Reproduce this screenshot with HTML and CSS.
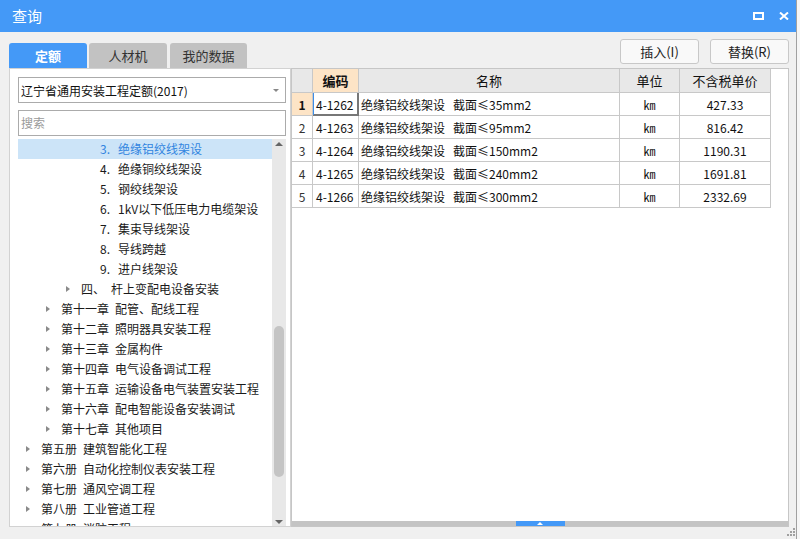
FILE: index.html
```html
<!DOCTYPE html>
<html lang="zh">
<head>
<meta charset="utf-8">
<title>查询</title>
<link rel="stylesheet" href="styles.css">
</head>
<body>
<div class="window">
  <header class="titlebar">
    <span class="title">查询</span>
    <div class="win-ctrls">
      <svg class="ic" width="11" height="8" viewBox="0 0 11 8"><rect x="1" y="1" width="9" height="6" fill="none" stroke="#fff" stroke-width="2"/></svg>
      <svg class="ic" width="10" height="8" viewBox="0 0 10 8"><path d="M1 0.5 L9 7.5 M9 0.5 L1 7.5" stroke="#fff" stroke-width="2" fill="none"/></svg>
    </div>
  </header>
  <div class="toolbar">
    <div class="tabs">
      <div class="tab active">定额</div>
      <div class="tab">人材机</div>
      <div class="tab narrow">我的数据</div>
    </div>
    <div class="actions">
      <button class="btn">插入(I)</button>
      <button class="btn">替换(R)</button>
    </div>
  </div>
  <div class="main">
    <aside class="left">
      <div class="select">
        <span class="select-text">辽宁省通用安装工程定额(2017)</span>
        <span class="select-arrow"></span>
      </div>
      <div class="search">搜索</div>
      <div class="tree">
        <div class="tree-body">
          <div class="row leaf sel"><span class="num">3.</span>绝缘铝绞线架设</div>
          <div class="row leaf"><span class="num">4.</span>绝缘铜绞线架设</div>
          <div class="row leaf"><span class="num">5.</span>钢绞线架设</div>
          <div class="row leaf"><span class="num">6.</span>1kV以下低压电力电缆架设</div>
          <div class="row leaf"><span class="num">7.</span>集束导线架设</div>
          <div class="row leaf"><span class="num">8.</span>导线跨越</div>
          <div class="row leaf"><span class="num">9.</span>进户线架设</div>
          <div class="row lv3"><span class="caret"></span><span class="pre">四、</span>杆上变配电设备安装</div>
          <div class="row lv2"><span class="caret"></span><span class="pre">第十一章</span>配管、配线工程</div>
          <div class="row lv2"><span class="caret"></span><span class="pre">第十二章</span>照明器具安装工程</div>
          <div class="row lv2"><span class="caret"></span><span class="pre">第十三章</span>金属构件</div>
          <div class="row lv2"><span class="caret"></span><span class="pre">第十四章</span>电气设备调试工程</div>
          <div class="row lv2"><span class="caret"></span><span class="pre">第十五章</span>运输设备电气装置安装工程</div>
          <div class="row lv2"><span class="caret"></span><span class="pre">第十六章</span>配电智能设备安装调试</div>
          <div class="row lv2"><span class="caret"></span><span class="pre">第十七章</span>其他项目</div>
          <div class="row lv1"><span class="caret"></span><span class="pre">第五册</span>建筑智能化工程</div>
          <div class="row lv1"><span class="caret"></span><span class="pre">第六册</span>自动化控制仪表安装工程</div>
          <div class="row lv1"><span class="caret"></span><span class="pre">第七册</span>通风空调工程</div>
          <div class="row lv1"><span class="caret"></span><span class="pre">第八册</span>工业管道工程</div>
          <div class="row lv1"><span class="caret"></span><span class="pre">第九册</span>消防工程</div>
        </div>
        <div class="vscroll">
          <span class="arr-up"></span>
          <div class="vtrack"><div class="vthumb"></div></div>
          <span class="arr-down"></span>
        </div>
      </div>
    </aside>
    <section class="right">
      <div class="grid">
        <div class="hd"></div>
        <div class="hd key">编码</div>
        <div class="hd">名称</div>
        <div class="hd">单位</div>
        <div class="hd">不含税单价</div>

        <div class="rn cur">1</div>
        <div class="c code focus">4-1262</div>
        <div class="c name">绝缘铝绞线架设<span class="sp"></span>截面≤35mm2</div>
        <div class="c ctr">㎞</div>
        <div class="c ctr">427.33</div>

        <div class="rn">2</div>
        <div class="c code">4-1263</div>
        <div class="c name">绝缘铝绞线架设<span class="sp"></span>截面≤95mm2</div>
        <div class="c ctr">㎞</div>
        <div class="c ctr">816.42</div>

        <div class="rn">3</div>
        <div class="c code">4-1264</div>
        <div class="c name">绝缘铝绞线架设<span class="sp"></span>截面≤150mm2</div>
        <div class="c ctr">㎞</div>
        <div class="c ctr">1190.31</div>

        <div class="rn">4</div>
        <div class="c code">4-1265</div>
        <div class="c name">绝缘铝绞线架设<span class="sp"></span>截面≤240mm2</div>
        <div class="c ctr">㎞</div>
        <div class="c ctr">1691.81</div>

        <div class="rn">5</div>
        <div class="c code">4-1266</div>
        <div class="c name">绝缘铝绞线架设<span class="sp"></span>截面≤300mm2</div>
        <div class="c ctr">㎞</div>
        <div class="c ctr">2332.69</div>
      </div>
      <div class="spacer"></div>
      <div class="hstrip"><div class="hhandle"><span class="tri"></span></div></div>
    </section>
  </div>
  <svg class="grip" width="9" height="9" viewBox="0 0 9 9">
    <rect x="7" y="1" width="2" height="2" fill="#a0a0a0"/>
    <rect x="4" y="4" width="2" height="2" fill="#a0a0a0"/>
    <rect x="7" y="4" width="2" height="2" fill="#a0a0a0"/>
    <rect x="1" y="7" width="2" height="2" fill="#a0a0a0"/>
    <rect x="4" y="7" width="2" height="2" fill="#a0a0a0"/>
    <rect x="7" y="7" width="2" height="2" fill="#a0a0a0"/>
  </svg>
</div>
</body>
</html>
```

FILE: styles.css
```css
html, body {
  margin: 0;
  padding: 0;
}
body {
  background: #f6f6f6;
  font-family: "Noto Sans CJK SC", "Noto Sans", sans-serif;
  font-size: 12px;
  color: #1a1a1a;
}
.window {
  width: 796px;
  height: 539px;
  background: #f0f0f0;
  border-right: 1px solid #a0a0a0;
  position: relative;
  display: flex;
  flex-direction: column;
  overflow: hidden;
}
.titlebar {
  height: 32px;
  flex: none;
  background: #4499f7;
  display: flex;
  align-items: center;
  padding: 0 7px 0 12px;
}
.title {
  color: #fff;
  font-size: 15px;
  line-height: 32px;
}
.win-ctrls {
  margin-left: auto;
  display: flex;
  align-items: center;
  gap: 15px;
}
.ic {
  display: block;
}

/* toolbar */
.toolbar {
  height: 36px;
  flex: none;
  display: flex;
  padding: 0 7px 0 9px;
}
.tabs {
  align-self: flex-end;
  display: flex;
  gap: 2px;
}
.tab {
  width: 78px;
  height: 25px;
  line-height: 25px;
  text-align: center;
  background: #c2c2c2;
  color: #333;
  font-size: 13px;
  border-radius: 3px 3px 0 0;
}
.tab.narrow {
  width: 77px;
  margin-left: 1px;
}
.tab.active {
  background: #4499f7;
  color: #fff;
  font-weight: bold;
}
.actions {
  margin-left: auto;
  margin-top: 7px;
  display: flex;
  gap: 11px;
  align-self: flex-start;
}
.btn {
  width: 79px;
  height: 25px;
  padding: 0;
  border: 1px solid #c8c8c8;
  border-radius: 3px;
  background: #f9f9f9;
  font-family: "Noto Sans CJK SC", sans-serif;
  font-size: 13px;
  color: #222;
}

/* main */
.main {
  height: 459px;
  flex: none;
  display: flex;
  padding: 0 7px 0 9px;
}
.left {
  width: 282px;
  flex: none;
  box-sizing: border-box;
  border: 1px solid #d2d2d2;
  background: #fff;
  display: flex;
  flex-direction: column;
  padding: 8px 4px 0 8px;
}
.select {
  height: 26px;
  flex: none;
  box-sizing: border-box;
  border: 1px solid #ababab;
  display: flex;
  align-items: center;
  padding: 0 6px 0 2px;
}
.select-text {
  font-size: 12px;
  color: #111;
}
.select-arrow {
  margin-left: auto;
  width: 0;
  height: 0;
  border-left: 3px solid transparent;
  border-right: 3px solid transparent;
  border-top: 3px solid #888;
}
.search {
  margin-top: 7px;
  height: 26px;
  flex: none;
  box-sizing: border-box;
  border: 1px solid #ababab;
  line-height: 24px;
  padding-left: 2px;
  color: #9a9a9a;
  font-size: 12px;
}
.tree {
  margin-top: 3px;
  flex: 1;
  min-height: 0;
  display: flex;
  overflow: hidden;
}
.tree-body {
  flex: 1;
  min-width: 0;
  overflow: hidden;
}
.row {
  height: 20px;
  line-height: 20px;
  white-space: nowrap;
  display: flex;
  align-items: center;
  font-size: 12px;
  color: #1a1a1a;
}
.row.sel {
  background: #cce4f8;
  color: #3184e0;
}
.row.leaf {
  padding-left: 82px;
}
.row.lv1 { padding-left: 8px; }
.row.lv2 { padding-left: 28px; }
.row.lv3 { padding-left: 48px; }
.num {
  display: inline-block;
  width: 18px;
}
.caret {
  display: inline-block;
  width: 0;
  height: 0;
  border-left: 4px solid #8a8a8a;
  border-top: 3.5px solid transparent;
  border-bottom: 3.5px solid transparent;
  margin-right: 11px;
}
.pre {
  margin-right: 6px;
}
.vscroll {
  width: 14px;
  flex: none;
  background: #e8e8e8;
  display: flex;
  flex-direction: column;
  align-items: center;
}
.arr-up {
  margin-top: 3px;
  width: 0;
  height: 0;
  border-left: 4px solid transparent;
  border-right: 4px solid transparent;
  border-bottom: 4px solid #666;
}
.arr-down {
  margin-bottom: 2px;
  width: 0;
  height: 0;
  border-left: 4px solid transparent;
  border-right: 4px solid transparent;
  border-top: 4px solid #666;
}
.vtrack {
  flex: 1;
  width: 100%;
  display: flex;
  flex-direction: column;
  align-items: center;
  padding-top: 180px;
}
.vthumb {
  width: 10px;
  height: 151px;
  border-radius: 5px;
  background: #c4c4c4;
}

/* right */
.right {
  flex: 1;
  border: 1px solid #c6c6c6;
  background: #fff;
  display: flex;
  flex-direction: column;
}
.grid {
  display: grid;
  grid-template-columns: 21px 46px 261px 60px 91px;
  grid-template-rows: 24px repeat(5, 23px);
  width: 479px;
}
.grid > div {
  box-sizing: border-box;
  border-right: 1px solid #c8c8c8;
  border-bottom: 1px solid #c8c8c8;
  white-space: nowrap;
  overflow: hidden;
  display: flex;
  align-items: center;
  font-size: 12px;
  color: #111;
}
.hd {
  background: #e8e8e8;
  justify-content: center;
  font-size: 13px !important;
}
.hd.key {
  background: #fde4c6;
  font-weight: bold;
}
.rn {
  justify-content: center;
  color: #333 !important;
}
.rn.cur {
  background: #fde4c6;
  font-weight: bold;
  color: #111 !important;
}
.c.code {
  padding-left: 3px;
}
.c.name {
  padding-left: 2px;
}
.c.ctr {
  justify-content: center;
}
.sp {
  display: inline-block;
  width: 8px;
}
.grid > .focus {
  box-shadow: inset 1px 0 0 #3d8ee8, inset -1px -1px 0 #777;
  border-right-color: #777;
  border-bottom-color: #777;
}
.spacer {
  flex: 1;
}
.hstrip {
  height: 5px;
  flex: none;
  background: #c4c4c4;
  display: flex;
  justify-content: center;
}
.hhandle {
  width: 49px;
  height: 5px;
  background: #4499f7;
  display: flex;
  justify-content: center;
  align-items: center;
}
.tri {
  width: 0;
  height: 0;
  border-left: 3px solid transparent;
  border-right: 3px solid transparent;
  border-bottom: 3px solid #fff;
}
.grip {
  position: absolute;
  right: 1px;
  bottom: 3px;
}
```
